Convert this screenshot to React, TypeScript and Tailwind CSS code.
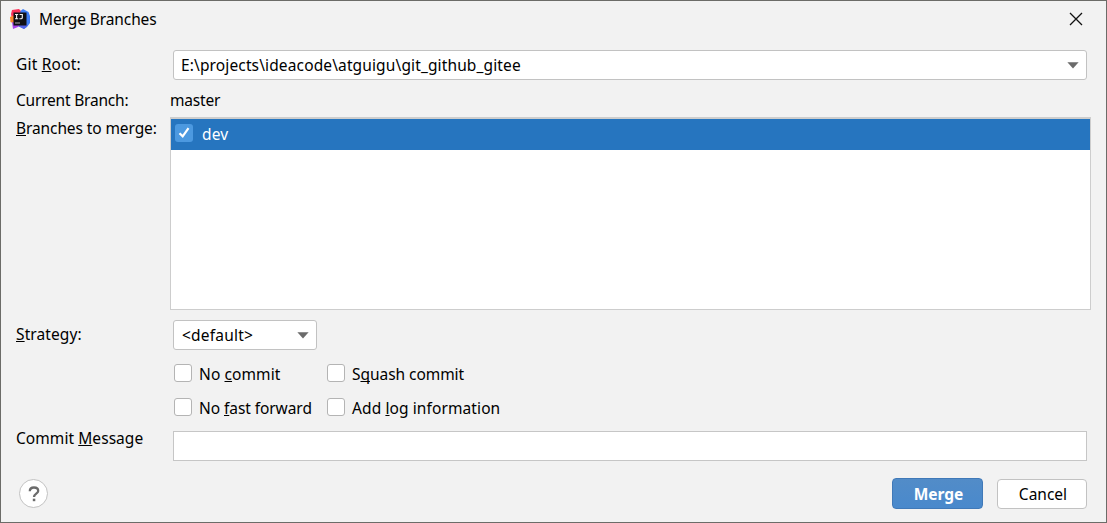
import type { ReactNode } from "react";

function Arrow() {
  return (
    <svg width="12" height="7" viewBox="0 0 12 7" className="mr-[7px] shrink-0">
      <path d="M0.4 0.3H11.6L6 6.6Z" fill="#6b6b6b" />
    </svg>
  );
}

function U({ children }: { children: ReactNode }) {
  return <span className="underline decoration-1 underline-offset-1 [text-decoration-skip-ink:none]">{children}</span>;
}

function CheckOption({ children, className }: { children: ReactNode; className: string }) {
  return (
    <label className={`flex h-5 items-start ${className}`}>
      <span className="mr-[7.500px] h-[18px] w-[18px] shrink-0 rounded-[3px] border border-[#b4b4b4] bg-white" />
      <span>{children}</span>
    </label>
  );
}

function AppLogo() {
  return (
    <svg width="20" height="20" viewBox="0 0 20 20">
      <path d="M2 1 9 0l3 3-3 8-7-1L1 5Z" fill="#fb3158" />
      <path d="M0 8 5 6l3 6-3 3-4.500-2Z" fill="#fb872b" />
      <path d="M10.500 2 13 0l5.500 3L20 7v7l-3 4-3 2-6-3Z" fill="#3f7df3" />
      <path d="m11 15 7 1-4 4-6-3Z" fill="#5362e8" />
      <path d="M2 13 10 16l-2 2-5 2Z" fill="#a843e8" />
      <rect x="3.500" y="3.500" width="13" height="13" fill="#101014" />
      <path d="M5 5.500h3.200M6.600 5.500v4.200M5 9.700h3.200M9.600 5.500h2.700v2.900q0 1.300-1.300 1.300H9.400" fill="none" stroke="#f4f4f4" strokeWidth="1.150" />
      <path d="M5 14h5" stroke="#aaa" strokeWidth="1" />
    </svg>
  );
}

export default function App() {
  return (
    <div className="flex h-[523px] w-[1107px] flex-col overflow-hidden border border-[#6c6c68] bg-[#f2f2f2] font-['Noto_Sans','Open_Sans',sans-serif] text-[15.5px] leading-5 whitespace-nowrap text-black">
      <header className="flex h-[49px] items-start pt-2 pr-[23px] pl-[9px]">
        <AppLogo />
        <h1 className="ml-[9px] tracking-[-0.1px]">Merge Branches</h1>
        <svg width="14" height="14" viewBox="0 0 14 14" className="mt-[3px] ml-auto">
          <path d="M1 1 13 13M13 1 1 13" stroke="#111" strokeWidth="1.300" />
        </svg>
      </header>

      <div className="flex h-[39px] items-start pl-[15px]">
        <span className="mt-1 w-[157px] tracking-[0.2px]">Git <U>R</U>oot:</span>
        <div className="flex h-[30px] w-[914px] items-center rounded-[3px] border border-[#c2c2c2] bg-white pl-[7px]">
          <span className="flex-1 tracking-[0.13px]">E:\projects\ideacode\atguigu\git_github_gitee</span>
          <Arrow />
        </div>
      </div>

      <div className="flex h-7 items-start pt-px pl-[15px]">
        <span className="w-[154px] tracking-[-0.2px]">Current Branch:</span>
        <span className="tracking-[-0.2px]">master</span>
      </div>

      <div className="flex h-[203px] items-start pl-[15px]">
        <span className="mt-px w-[154px] tracking-[-0.1px]"><U>B</U>ranches to merge:</span>
        <div className="h-[193px] w-[921px] border border-t-2 border-[#cdcdcd] bg-white">
          <div className="flex h-[31px] items-start bg-[#2675bf] pt-[5px] pl-[3.500px] text-white">
            <span className="grid h-[18px] w-[18px] place-items-center rounded-[3px] bg-[#4c99e0]">
              <svg width="14" height="14" viewBox="0 0 14 14">
                <path d="m2.500 7.200 3.200 3.200L11.500 2.200" fill="none" stroke="#fff" strokeWidth="2.200" />
              </svg>
            </span>
            <span className="ml-[9.500px] tracking-[0.2px]">dev</span>
          </div>
        </div>
      </div>

      <div className="flex h-[44px] items-start pl-[15px]">
        <span className="mt-1 w-[157px] tracking-[0.1px]"><U>S</U>trategy:</span>
        <div className="flex h-[30px] w-[144px] items-center rounded-[3px] border border-[#c2c2c2] bg-white pl-2">
          <span className="flex-1 tracking-[0.2px]">&lt;default&gt;</span>
          <Arrow />
        </div>
      </div>

      <div className="flex h-[34px] items-start pl-[172.500px]">
        <CheckOption className="w-[153px] tracking-[0.1px]">No <U>c</U>ommit</CheckOption>
        <CheckOption className="w-[200px] tracking-[-0.05px]">S<U>q</U>uash commit</CheckOption>
      </div>
      <div className="flex h-[33px] items-start pl-[172.500px]">
        <CheckOption className="w-[153px] tracking-[-0.07px]">No <U>f</U>ast forward</CheckOption>
        <CheckOption className="w-[200px] tracking-[0.1px]">Add <U>l</U>og information</CheckOption>
      </div>

      <div className="flex h-[47px] items-start pl-[15px]">
        <span className="-mt-[3px] w-[157px] tracking-[0.06px]">Commit <U>M</U>essage</span>
        <input aria-label="Commit Message" className="h-[30px] w-[914px] border border-[#c6c6c6] bg-white" />
      </div>

      <footer className="flex items-start pr-[19px] pl-[18px]">
        <button aria-label="Help" className="mt-px grid h-[29px] w-[29px] place-items-center rounded-full border border-[#c2c2c2] bg-white">
          <svg width="12" height="16" viewBox="0 0 12 16">
            <path d="M1.800 5.200C1.800 2.800 3.600 1.500 6 1.500s4.200 1.300 4.200 3.400C10.200 7.600 6 7.700 6 11" fill="none" stroke="#6b6b6b" strokeWidth="2.300" />
            <rect x="4.800" y="12.700" width="2.500" height="2.500" fill="#6b6b6b" />
          </svg>
        </button>
        <button className="ml-auto h-[31px] w-[91px] rounded-[4px] border border-[#4079b8] bg-linear-to-b from-[#528cc8] to-[#4989cc] pl-[2px] font-bold text-white">Merge</button>
        <button className="mt-px ml-[14px] h-[30px] w-[90px] rounded-[4px] border border-[#c2c2c2] bg-white pl-[2px]">Cancel</button>
      </footer>
    </div>
  );
}
